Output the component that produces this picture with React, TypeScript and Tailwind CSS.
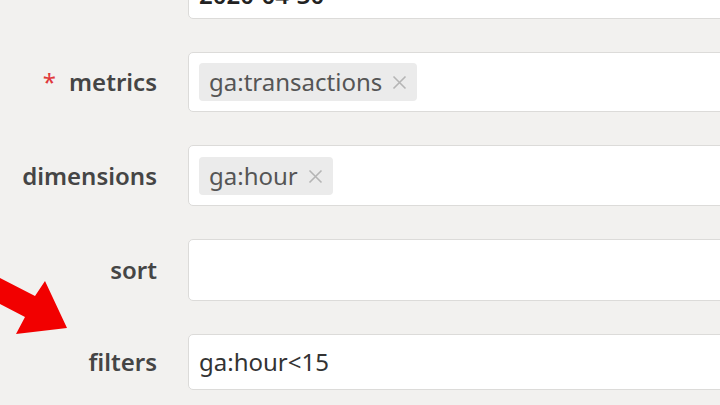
import React from "react";

function Tag({ text }: { text: string }) {
  return (
    <div className="flex h-[38px] items-center gap-[10px] rounded-[4px] bg-[#ebebeb] pl-[10px] pr-[10px]">
      <span className="text-[24px] leading-none text-[#555555]">{text}</span>
      <svg width="15" height="15" viewBox="0 0 15 15" className="mt-[1px]">
        <path d="M1.5 1.5 L13.5 13.5 M13.5 1.5 L1.5 13.5" stroke="#b5b5b5" strokeWidth="1.6" fill="none" />
      </svg>
    </div>
  );
}

function Row({
  label,
  required,
  h,
  children,
}: {
  label: string;
  required?: boolean;
  h: string;
  children?: React.ReactNode;
}) {
  return (
    <div className="flex items-center">
      <div className="flex w-[157px] shrink-0 items-center justify-end gap-[13px] text-[24px] font-semibold text-[#454545]">
        {required && <span className="text-[24px] font-normal text-[#e0393b]">*</span>}
        <span>{label}</span>
      </div>
      <div
        className={`ml-[31px] flex w-[600px] shrink-0 items-center rounded-[5px] border-[1.5px] border-[#dcdbd9] bg-white px-[10px] ${h}`}
      >
        {children}
      </div>
    </div>
  );
}

export default function App() {
  return (
    <div
      className="relative h-[405px] w-[720px] overflow-hidden bg-[#f2f1ef]"
      style={{ fontFamily: '"Noto Sans", sans-serif' }}
    >
      <div className="mt-[-41px] flex flex-col gap-[33px]">
        <div className="flex items-center">
          <div className="flex h-[60px] w-[157px] shrink-0 items-end justify-end pb-[17px] text-[24px] font-semibold text-[#454545]">
            end date
          </div>
          <div className="ml-[31px] flex h-[60px] w-[600px] shrink-0 items-end rounded-[5px] border-[1.5px] border-[#dcdbd9] bg-white px-[10px] pb-[11px]">
            <span className="text-[24px] font-semibold leading-none text-[#222]">2020-04-30</span>
          </div>
        </div>
        <Row label="metrics" required h="h-[60px]">
          <Tag text="ga:transactions" />
        </Row>
        <Row label="dimensions" h="h-[61px]">
          <Tag text="ga:hour" />
        </Row>
        <Row label="sort" h="h-[62px]" />
        <Row label="filters" h="h-[56px]">
          <span className="text-[24px] text-[#333]">ga:hour&lt;15</span>
        </Row>
      </div>
      <svg className="absolute left-0 top-0" width="720" height="405" viewBox="0 0 720 405">
        <polygon
          points="0,278 35,296 45,281 67,328 16,334 25,317 0,304"
          fill="#f20000"
        />
      </svg>
    </div>
  );
}
